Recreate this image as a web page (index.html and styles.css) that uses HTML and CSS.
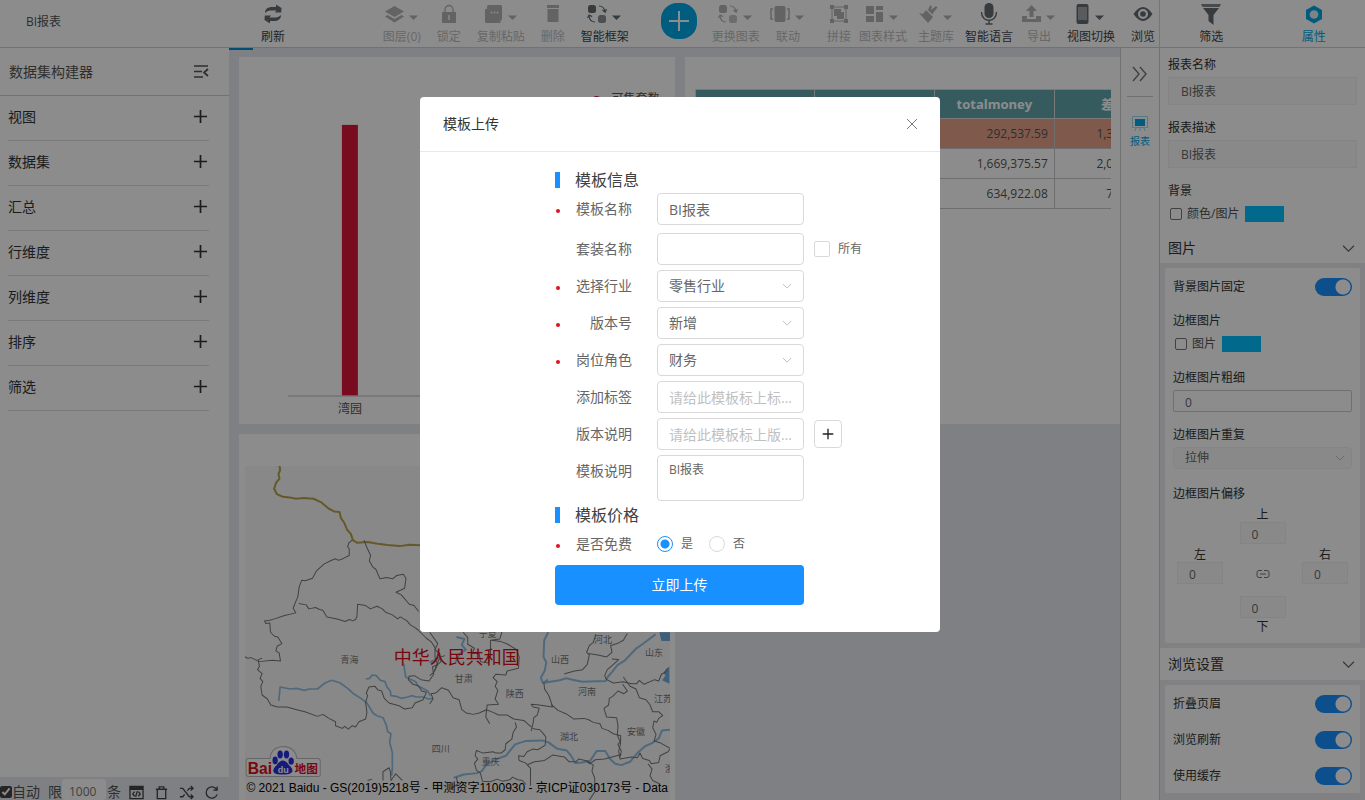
FILE: index.html
```html
<!DOCTYPE html>
<html lang="zh-CN">
<head>
<meta charset="utf-8">
<meta name="viewport" content="width=device-width, initial-scale=1">
<title>BI报表</title>
<link rel="stylesheet" href="styles.css">
</head>
<body>
<svg class="defs" aria-hidden="true">
  <symbol id="plus" viewBox="0 0 16 16"><path d="M8 1v14M1 8h14" fill="none" stroke="currentColor" stroke-width="1.8"/></symbol>
  <symbol id="chev" viewBox="0 0 12 12"><path d="M1 3.500l5 5 5-5" fill="none" stroke="currentColor" stroke-width="1.1"/></symbol>
  <symbol id="caret" viewBox="0 0 10 6"><path d="M0 .5h9L4.500 5z" fill="currentColor"/></symbol>
  <symbol id="swap" viewBox="0 0 20 20"><rect x="1" y="1" width="8" height="8" rx="2.500" fill="currentColor"/><rect x="11" y="11" width="8" height="8" rx="2.500" fill="currentColor" opacity=".75"/><path d="M12 2c3.500 0 5.500 2 6 6M15.500 6l2.700 2.300L19.500 5M8 18c-3 0-5.500-2-6-6M.5 14l1.600-3 3 1.600" fill="none" stroke="currentColor" stroke-width="1.200"/></symbol>
</svg>

<div class="app">
  <header class="topbar">
    <div class="doc-name">BI报表</div>
    <nav class="tools">
      <button class="tool dark refresh" type="button"><span class="tool-icon"><svg width="20" height="20" viewBox="0 0 20 20" fill="currentColor"><path d="M2 9c0-4 3-6 7-6h4V.5L18.500 4l-.3 4.500H12l1.500-2H9C6 6.500 4 7 2 9zM18 11c0 4-3 6-7 6H7v2.500L1.500 16l.3-4.500H8l-1.500 2H11c3 0 5-.5 7-2.500z"/></svg></span>刷新</button>
      <div class="tool-group g16 first">
        <button class="tool" type="button"><span class="tool-icon"><svg width="19" height="19" viewBox="0 0 19 19" fill="currentColor"><path d="M9.500 1L19 6.500 9.500 12 0 6.500zM2.500 10l7 4 7-4L19 11.500 9.500 17.500 0 11.500z"/></svg><svg class="caret"><use href="#caret"/></svg></span>图层(0)</button>
        <button class="tool" type="button"><span class="tool-icon"><svg width="16" height="20" viewBox="0 0 16 20"><path d="M4 9V5.500a4 4 0 018 0V9" fill="none" stroke="currentColor" stroke-width="1.300"/><path d="M1 8h14v11H1zM7.300 11v5h1.400v-5z" fill="currentColor" fill-rule="evenodd"/></svg></span>锁定</button>
        <button class="tool" type="button"><span class="tool-icon"><svg width="19" height="19" viewBox="0 0 19 19"><path d="M4.500 0h12q1.500 0 1.500 1.500V14q0 1.500-1.500 1.500V18H2.500Q1 18 1 16.500V4h2V1.500Q3 0 4.500 0z" fill="currentColor"/><g fill="#fff"><circle cx="7.500" cy="7.500" r=".9"/><circle cx="10.500" cy="7.500" r=".9"/><circle cx="13.500" cy="7.500" r=".9"/></g></svg><svg class="caret"><use href="#caret"/></svg></span>复制粘贴</button>
        <button class="tool" type="button"><span class="tool-icon"><svg width="14" height="18" viewBox="0 0 14 18" fill="currentColor"><path d="M1 0h12v3H1zM1.500 4h11V17h-11z"/></svg></span>删除</button>
        <button class="tool dark" type="button"><span class="tool-icon"><svg width="20" height="20"><use href="#swap"/></svg><svg class="caret"><use href="#caret"/></svg></span>智能框架</button>
      </div>
      <button class="add" type="button" aria-label="添加"><svg width="20" height="20" viewBox="0 0 20 20"><path d="M10 0v20M0 10h20" stroke="#fff" stroke-width="2"/></svg></button>
      <div class="tool-group g16">
        <button class="tool" type="button"><span class="tool-icon"><svg width="20" height="20"><use href="#swap"/></svg><svg class="caret"><use href="#caret"/></svg></span>更换图表</button>
        <button class="tool" type="button"><span class="tool-icon"><svg width="20" height="18" viewBox="0 0 20 18"><rect x="4.500" y="1" width="11" height="16" rx="2" fill="currentColor"/><path d="M3 4H1v10h2M17 4h2v10h-2" fill="none" stroke="currentColor" stroke-width="1.500"/></svg><svg class="caret"><use href="#caret"/></svg></span>联动</button>
      </div>
      <div class="tool-group g8 third">
        <button class="tool" type="button"><span class="tool-icon"><svg width="18" height="18" viewBox="0 0 18 18"><path d="M2 2h14v14H2z" fill="none" stroke="currentColor"/><path d="M4 4h7v3h3v7H7v-3H4zM0 0h4v4H0zM14 0h4v4h-4zM0 14h4v4H0zM14 14h4v4h-4z" fill="currentColor"/></svg></span>拼接</button>
        <button class="tool" type="button"><span class="tool-icon"><svg width="18" height="18" viewBox="0 0 18 18" fill="currentColor"><path d="M0 1h8v8H0zM10 1h7v4h-7zM0 11h8v6H0zM10 7h7v10h-7z"/></svg><svg class="caret"><use href="#caret"/></svg></span>图表样式</button>
      </div>
      <div class="tool-group g12">
        <button class="tool" type="button"><span class="tool-icon"><svg width="20" height="20" viewBox="0 0 20 20" fill="currentColor"><path d="M1 9l4 1 3-4 7 7-5 6zM10 6L12 1.500l2 .5-1 4 5-4 1.500 1.500-4 5-1 2z"/></svg><svg class="caret"><use href="#caret"/></svg></span>主题库</button>
        <button class="tool dark" type="button"><span class="tool-icon"><svg width="18" height="22" viewBox="0 0 18 22"><rect x="4.500" y="0" width="9" height="15" rx="4.500" fill="currentColor"/><path d="M1.500 9c0 11 15 11 15 0M9 17v4M5.500 21h7" fill="none" stroke="currentColor" stroke-width="1.400"/></svg></span>智能语言</button>
      </div>
      <div class="tool-group g16">
        <button class="tool" type="button"><span class="tool-icon"><svg width="19" height="18" viewBox="0 0 19 18" fill="currentColor"><path d="M9.500 0L15 6h-3.500v6h-4V6H4zM0 11h5v3h9v-3h5v6H0z"/></svg><svg class="caret"><use href="#caret"/></svg></span>导出</button>
        <button class="tool dark" type="button"><span class="tool-icon"><svg width="14" height="20" viewBox="0 0 14 20"><path d="M2.500 0h8q2 0 2 2v16q0 2-2 2h-8q-2 0-2-2V2q0-2 2-2zM2 3v13h9V3z" fill="currentColor" fill-rule="evenodd"/><path d="M2 3h9v13H2z" fill="currentColor" opacity=".6"/></svg><svg class="caret"><use href="#caret"/></svg></span>视图切换</button>
        <button class="tool dark" type="button"><span class="tool-icon"><svg width="20" height="16" viewBox="0 0 20 16"><path d="M.5 8Q10-6 19.500 8 10 22 .5 8zM10 3a5 5 0 100 10 5 5 0 000-10z" fill="currentColor" fill-rule="evenodd"/><circle cx="10" cy="8" r="2.800" fill="currentColor"/></svg></span>浏览</button>
      </div>
    </nav>
    <div class="side-tabs">
      <button class="tool dark" type="button"><span class="tool-icon"><svg width="20" height="21" viewBox="0 0 20 21"><path d="M0 0h20l-1.500 3h-17z" fill="currentColor" opacity=".8"/><path d="M2 4h16l-5.500 7v10L7.500 17v-6z" fill="currentColor"/></svg></span>筛选</button>
      <button class="tool active" type="button"><span class="tool-icon"><svg width="18" height="19" viewBox="0 0 18 19"><path d="M9 .5l8 4.500v9l-8 4.500L1 14V5z" fill="currentColor"/><circle cx="9" cy="9.500" r="4.300" fill="#e9eef3"/></svg></span>属性</button>
    </div>
  </header>

  <div class="workspace">
    <aside class="left">
      <div class="left-head"><span>数据集构建器</span><svg width="15" height="13" viewBox="0 0 15 13" fill="none" stroke="currentColor" stroke-width="1.700"><path d="M0 1h14M0 6.500h8M0 12h9M14 4l-4 3.500 4 3.500"/></svg></div>
      <ul class="fields">
        <li>视图<button type="button" aria-label="添加视图"><svg><use href="#plus"/></svg></button></li>
        <li>数据集<button type="button" aria-label="添加数据集"><svg><use href="#plus"/></svg></button></li>
        <li>汇总<button type="button" aria-label="添加汇总"><svg><use href="#plus"/></svg></button></li>
        <li>行维度<button type="button" aria-label="添加行维度"><svg><use href="#plus"/></svg></button></li>
        <li>列维度<button type="button" aria-label="添加列维度"><svg><use href="#plus"/></svg></button></li>
        <li>排序<button type="button" aria-label="添加排序"><svg><use href="#plus"/></svg></button></li>
        <li>筛选<button type="button" aria-label="添加筛选"><svg><use href="#plus"/></svg></button></li>
      </ul>
      <div class="left-foot">
        <label class="auto"><input type="checkbox" checked>自动</label>
        <label class="limit">限<input type="text" value="1000" aria-label="限制条数">条</label>
        <div class="foot-icons">
          <svg viewBox="0 0 16 16"><path d="M1 1.500h14v13H1zM1 4.500h14M6 7L4 9.500 6 12M10 7l2 2.500-2 2.500M9 6.500l-2 6"/><path d="M1 3h14" stroke-width="3"/></svg>
          <svg viewBox="0 0 16 16"><path d="M2 4.500h12M5.500 4V2h5v2M3.500 5v9.500h9V5"/></svg>
          <svg viewBox="0 0 16 16"><path d="M1 3.500h3l7 9h4M1 12.500h3l2-2.500M9 6l2-2.500h4M12.500 1L15 3.500 12.500 6M12.500 10l2.500 2.500-2.500 2.500"/></svg>
          <svg viewBox="0 0 16 16"><path d="M13.500 5A6 6 0 1014 10M14 1.500V5.500H10"/></svg>
        </div>
      </div>
    </aside>

    <main class="canvas">
      <section class="card">
        <svg class="chart" viewBox="0 0 436 367" preserveAspectRatio="xMidYMid meet">
          <circle cx="358" cy="43" r="4" fill="#dc143c"/>
          <text x="373" y="46" font-size="12" fill="#555">可售套数</text>
          <rect x="103" y="68" width="16" height="271" fill="#dc143c"/>
          <path d="M49 339.500h370" stroke="#bbb"/>
          <text x="111" y="356" font-size="12" fill="#555" text-anchor="middle">湾园</text>
        </svg>
      </section>
      <section class="card table-card">
        <div class="table-clip">
          <table>
            <thead><tr><th></th><th></th><th>totalmoney</th><th>差额</th></tr></thead>
            <tbody>
              <tr class="hot"><td></td><td></td><td>292,537.59</td><td>1,300,000.00</td></tr>
              <tr><td></td><td></td><td>1,669,375.57</td><td>2,000,000.00</td></tr>
              <tr><td></td><td></td><td>634,922.08</td><td>700,000.00</td></tr>
            </tbody>
          </table>
        </div>
      </section>
      <section class="card map-card">
        <svg class="map" viewBox="0 0 425 334" preserveAspectRatio="xMidYMid slice">
          <rect width="425" height="334" fill="#f8f8f7"/>
          <g transform="translate(-15 -36) scale(.33333)" fill="none" stroke-linejoin="round">
            <g stroke="#b5a24c" stroke-width="6"><path d="M150 108l2 12-5 12 3 14-10 12-6 18 8 16 18 8 20 2 20 4 22-2 30 2 22 10 24 20 16 8 16 2 4 18 10 14 8 20 12 14 6 18 12 8 32-2 30 5 30 4 36 3 30-4 50 2"/></g>
            <g stroke="#8fbfe4" stroke-width="5"><path d="M148 812l4-42 30 6 20-2 22 6 16-4 24 0 22-18 20-8 26 8 22 16 20 18 20 12 18 14 18 30 12 8 18 6 10 22 4 20 10 6-4 26 8 30 0 46-2 24"/><path d="M408 746l12-2 8-10 12 2 12 14 14 4 6 16 10 12 2 14 16 2 14 6 20-4 12-4 14 4 20 0 16 6 14-2M522 700l6 40 30 14 6 12 30 16 8 14"/></g>
            <g stroke="#777" stroke-width="3">
              <path d="M368 330l-10 8-4 12 5 6 0 20-16 8-8 4-10 2-8-4-14 6-20 10-22 20-12 22-22 8-10-2-8 20-4 30-8 18-6 16 8 14-34 8-30 10-14 4-16 2 4 8 12-2 2 28 12 12 10 2 12 20-14 8-4 14 10 6 4 24-24-2-40 4-24-12-10 2-16-8-8-8"/>
              <path d="M208 520l22 4 8 12 20-4 12 6 10 2 12 20 20 4 16 4 18 6 14-6 10 4 8-4 4-10 2-36 24 4 14 10 20-8 16 8 10 10 20 8 16 12 8-6 20 12 10 12 14 8 10 8 24 24 14 10 12 18 0 30 8 20-10 22"/>
              <path d="M403 330l8 20 12 26-4 16 10 18 10 8 12 28 20-4 18 4 12-10 20-4 8 12-4 30-26 12 16 8 24 28 14 4 14 18"/>
              <path d="M98 684l-12 4 4 20-6 10 14 12-6 14 8 10-6 14 4 26 16 12 10 18 20 6 28 0 30 8 24 6 38 14 16-6 18 12 20 10 0 12 20 8 8-6 10 8 12-10 10 4 10-16 20-8 4-20-4-30 6-20-4-8 8-18 18-2 8 10 12 4 8 22 14 14 30 8 16 10 24-4 8-14 24-10 10-22-14-4-10-16-16-4-14-14 2-10 16-2 20 12 24 4 14-20-4-22 12-6 12-24 14-4"/>
              <path d="M460 1050l0-26 18-12 4 10 2 28 14-20 20 20M414 1050l14-4"/>
            </g>
          </g>
          <g transform="translate(185 134) scale(.33333)" fill="none" stroke-linejoin="round">
            <g stroke="#8fbfe4" stroke-width="6"><path d="M355 96l-12 24-2 50 8 16-4 24-12 22 6 16 50-8 20-6 18 4 30 6 70-2 6-12 14-16 16-20 20-12 34-36 20-14 40-30M340 248l14-10M72 532l30-10 40-4 14-6 14-20 30-16 28-10 28-34 30-10 50-2 20 6 24 18 30 6 12 14 14 24 20-2 24-4 20-30 26 0 14 24 16 14 18 4 26-10 22-26 22-20 22-10 20-14 10-24 42-4M80 110l24 6-8 18 12 14-20 14-10 22M0 186l20-8 12-8"/></g>
            <path d="M688 96h32v26h-26zM718 198l-18 18 6 10-10 14 22 10z" fill="#6fb0e0"/>
            <g stroke="#777" stroke-width="3">
              <path d="M0 96l24 34-8 18 14 12 4 24-14 12-8 20-12 10M100 96l14 16 0 20 20 12-6 16 20 0 4 24 24 4 6-20 0-48 28-4 6-20-2-14M184 120l30 4 20 8 26 16 8 22-2 34-34 8-4 12-30-2-8 10 12 12-6 14 8 12-8 26 10 16-34 2-4 36 12 20"/>
              <path d="M0 310l10-14-6-16 14-2 18-16 20 8 14 22 18 6 8 30 14 10 20 4 18-4 22-10 20 8 16 8 26 0 20 12 14 2 16 2 20 18 12 8 16 2 12 14 6 8-2 24-22 14-16-2-16 8-10 14-16-2 2 14 20 8 14 16 0 52M342 246l2 20 12 18 8 22 4 14-40-6-24-2 6 8 18 4-6 20-10 8-2 14-6 26"/>
              <path d="M364 312l20 18 24 10 24 16 30-2 14 4 14 8 20 4 6 14 18 6 16 10 22 6 0 16-8 10 10 20-4 18M408 220l-4 0 30-8 24-4 14-16 6-28-8-8 8-20 12-10 8-24M474 160l30 4 26 6 16-14-4-20 20-6 18-10 12-20M546 176l20 2-20 18-14 12-8 18 6 12 20 10 30-4 24 6 16 0 8-10 14 12 32-14 12 4 8-20 12-6 6-12"/>
              <path d="M578 252l14 20-10 8-18-8-16 16-10 6-2 20-14 10 8 26 30 2 4 24-2 28 10 24-6 24 4 24 34-6 18 2 8-14 8 16 20 6 6 10 22-4 4-20 24-12 16-24-2-16M580 230l20 28 18 8 10 26 20 6 12 16 8 20 18 0 12 12-12 8-6 12-8-4-4 20 10 20-6 20 20 6 28 16M654 490l12 16-6 20 8 14 20 10"/>
              <path d="M256 366l4 14-10 16-4 20-18 14-2 18-12 10-16 0-8-4-30 4-20-8-4 16 8 10-10 12 6 22 12 8 6 24 24 2 20-8 16 6 22-4 8-8 16 8 14 2 10 12M294 492l20-8 30-4 24-16 36 6 14 14 20 0 8-8 20 4 14 10 16-12 28-2 50-14M470 480l20 14-4 18 8 20 2 40-20 30M80 530l4 20-20 14"/>
            </g>
          </g>
          <g font-size="9" fill="#777">
            <text x="96" y="197">青海</text><text x="210" y="216">甘肃</text><text x="234" y="171">宁夏</text><text x="349" y="177">河北</text><text x="306" y="197">山西</text><text x="400" y="190">山东</text><text x="261" y="231">陕西</text><text x="333" y="229">河南</text><text x="409" y="236">江苏</text><text x="315" y="274">湖北</text><text x="382" y="269">安徽</text><text x="187" y="286">四川</text><text x="237" y="299">重庆</text><text x="420" y="306">浙</text>
          </g>
          <text x="149" y="198" font-size="18" fill="#d80f18">中华人民共和国</text>
          <g transform="translate(-15 -36) scale(.33333)">
            <path d="M58 984h64q2-34 40-36 36 2 40 36h62q8 0 8 8v40q0 6-6 6H58q-8 0-8-8v-38q0-8 8-8z" fill="#fff" stroke="#bbb" stroke-width="3"/>
            <text x="55" y="1030" font-size="47" font-weight="700" fill="#dc0f18" class="latin">Bai</text>
            <g fill="#2932e1"><ellipse cx="137" cy="990" rx="8" ry="12"/><ellipse cx="152" cy="972" rx="8" ry="12"/><ellipse cx="171" cy="972" rx="8" ry="12"/><ellipse cx="185" cy="992" rx="8" ry="11"/><path d="M160 990q10 0 18 14 14 12 10 20-5 10-28 8-24 2-28-8-3-8 10-20 8-14 18-14z"/></g>
            <text x="145" y="1027" font-size="27" font-weight="700" fill="#fff" class="latin">du</text>
            <text x="195" y="1027" font-size="35" font-weight="700" fill="#dc0f18">地图</text>
          </g>
          <text x="2" y="326" font-size="12" fill="#000" class="latin">© 2021 Baidu - GS(2019)5218号 - 甲测资字1100930 - 京ICP证030173号 - Data</text>
        </svg>
      </section>
    </main>

    <nav class="rail">
      <button type="button" class="collapse" aria-label="收起"><svg width="16" height="16" viewBox="0 0 16 16" fill="none" stroke="currentColor" stroke-width="1.400"><path d="M1 1l6 7-6 7M8 1l6 7-6 7"/></svg></button>
      <button type="button" class="rail-item"><svg width="16" height="16" viewBox="0 0 16 16"><path d="M.5.500h15v11H.5zM4 12l-1 3M12 12l1 3M8 12v3" fill="none" stroke="currentColor" opacity=".4"/><path d="M3 3h10v7H3z" fill="currentColor"/></svg>报表</button>
    </nav>

    <aside class="props">
      <div class="prop-block">
        <label for="rname">报表名称</label><input id="rname" class="soft" type="text" value="BI报表">
        <label for="rdesc">报表描述</label><input id="rdesc" class="soft" type="text" value="BI报表">
        <span class="lbl">背景</span>
        <div class="check-row"><label><input type="checkbox">颜色/图片</label><span class="swatch"></span></div>
      </div>
      <div class="sec-head short">图片<svg><use href="#chev"/></svg></div>
      <div class="sec-body">
        <div class="panel">
          <label class="toggle-row">背景图片固定<input class="toggle" type="checkbox" checked></label>
          <span class="lbl">边框图片</span>
          <div class="check-row"><label><input type="checkbox">图片</label><span class="swatch"></span></div>
          <label class="lbl" for="bw">边框图片粗细</label><input id="bw" class="line" type="text" value="0">
          <label class="lbl" for="br">边框图片重复</label>
          <div class="pick"><select id="br" class="soft-select"><option>拉伸</option></select><svg><use href="#chev"/></svg></div>
          <span class="lbl">边框图片偏移</span>
          <div class="offsets">
            <label class="o-top">上<input type="text" value="0"></label>
            <label class="o-left">左<input type="text" value="0"></label>
            <svg class="link" viewBox="0 0 14 10"><path d="M6 1.500H3a2 2 0 00-2 2v3a2 2 0 002 2h3M8 1.500h3a2 2 0 012 2v3a2 2 0 01-2 2H8M4 5h6" fill="none" stroke="currentColor"/></svg>
            <label class="o-right">右<input type="text" value="0"></label>
            <label class="o-bottom"><input type="text" value="0">下</label>
          </div>
        </div>
      </div>
      <div class="sec-head">浏览设置<svg><use href="#chev"/></svg></div>
      <div class="sec-body grow">
        <div class="panel toggles">
          <label class="toggle-row">折叠页眉<input class="toggle" type="checkbox" checked></label>
          <label class="toggle-row">浏览刷新<input class="toggle" type="checkbox" checked></label>
          <label class="toggle-row">使用缓存<input class="toggle" type="checkbox" checked></label>
        </div>
      </div>
    </aside>
  </div>
</div>

<div class="overlay">
  <form class="modal" role="dialog" aria-labelledby="mtitle">
    <div class="modal-head"><h2 id="mtitle">模板上传</h2><button type="button" aria-label="关闭"><svg width="10" height="10" viewBox="0 0 10 10"><path d="M0 0l10 10M10 0L0 10" stroke="currentColor"/></svg></button></div>
    <div class="modal-body">
      <h3>模板信息</h3>
      <div class="row wide"><label class="req" for="f1">模板名称</label><input id="f1" type="text" value="BI报表"></div>
      <div class="row"><label for="f2">套装名称</label><input id="f2" type="text"><label class="all"><input type="checkbox">所有</label></div>
      <div class="row"><label class="req" for="f3">选择行业</label><div class="pick"><select id="f3"><option>零售行业</option></select><svg><use href="#chev"/></svg></div></div>
      <div class="row"><label class="req" for="f4">版本号</label><div class="pick"><select id="f4"><option>新增</option></select><svg><use href="#chev"/></svg></div></div>
      <div class="row"><label class="req" for="f5">岗位角色</label><div class="pick"><select id="f5"><option>财务</option></select><svg><use href="#chev"/></svg></div></div>
      <div class="row"><label for="f6">添加标签</label><input id="f6" type="text" placeholder="请给此模板标上标签名称"></div>
      <div class="row"><label for="f7">版本说明</label><input id="f7" type="text" placeholder="请给此模板标上版本说明"><button class="more" type="button" aria-label="添加版本说明"><svg width="12" height="12"><use href="#plus"/></svg></button></div>
      <div class="row"><label for="f8">模板说明</label><textarea id="f8">BI报表</textarea></div>
      <h3 class="price">模板价格</h3>
      <div class="row radios"><span class="req name">是否免费</span><label><input type="radio" name="free" checked>是</label><label><input type="radio" name="free">否</label></div>
      <button class="submit" type="button">立即上传</button>
    </div>
  </form>
</div>
</body>
</html>
```
FILE: styles.css
```css
* { box-sizing: border-box; }
html, body { height: 100%; }
body {
  margin: 0;
  overflow: hidden;
  font: 12px/18px "Open Sans", "Noto Sans CJK SC", sans-serif;
  color: #555;
}
button, input, select, textarea { font: inherit; color: inherit; }
button { padding: 0; border: 0; background: none; cursor: pointer; }
.defs { display: none; }
.latin { font-family: "Liberation Sans", "Noto Sans CJK SC", sans-serif; }

.app { display: flex; flex-direction: column; height: 100vh; background: #fff; }

/* top bar */
.topbar { display: flex; height: 48px; flex: none; border-bottom: 1px solid #d0d0d0; }
.doc-name { width: 229px; padding: 13px 26px; flex: none; }
.tools { display: flex; flex: 1; align-items: flex-start; border-right: 1px solid #d8d8d8; padding-right: 4px; }
.tool-group { display: flex; }
.g8 { gap: 8px; }
.g12 { gap: 11px; margin: 0 14px 0 11px; }
.g16 { gap: 16px; }
.third { margin-left: 27px; }
.first { margin-left: auto; }
.refresh { margin-left: 32px; }
.tool { display: flex; flex-direction: column; align-items: center; color: #bdbdbd; white-space: nowrap; }
.tool-icon { display: flex; align-items: center; justify-content: center; gap: 5px; height: 28px; width: 0; color: #b4b4b4; }
.tool-icon svg { flex: none; }
.caret { width: 10px; height: 6px; margin-top: 8px; }
.tool.dark { color: #444; }
.tool.dark .tool-icon { color: #656c70; }
.tool.active, .tool.active .tool-icon { color: #00a8e8; }
.add { display: grid; place-items: center; width: 36px; height: 36px; margin: 3px 15px 0 32px; border-radius: 16px; background: #00a9e8; }
.side-tabs { width: 205px; flex: none; display: flex; justify-content: space-around; }

/* workspace */
.workspace { display: flex; flex: 1; min-height: 0; }
.left { width: 229px; flex: none; display: flex; flex-direction: column; font-size: 14px; background: #fff; }
.left-head { display: flex; justify-content: space-between; align-items: center; height: 48px; flex: none; padding: 0 20px 0 9px; border-bottom: 1px solid #d0d0d0; }
.fields { list-style: none; margin: 0; padding: 0 20px 0 8px; flex: 1; }
.fields li { display: flex; justify-content: space-between; align-items: center; height: 45px; padding: 0 1px 3px 0; border-bottom: 1px solid #dedede; color: #333; }
.fields button, .fields svg { display: block; width: 15px; height: 15px; }
.left-foot { display: flex; align-items: flex-end; height: 23px; background: #e7eaee; line-height: 16px; }
.auto { display: flex; align-items: center; }
.auto input { width: 12px; height: 12px; margin: 0; accent-color: #444; }
.limit { display: flex; align-items: flex-end; margin-left: 8px; }
.limit input { width: 44px; height: 21px; margin-right: 1px; padding: 4px 7px 0; border: 0; border-radius: 3px; background: #fff; font-size: 12px; color: #777; }
.foot-icons { display: flex; gap: 10px; margin-left: 8px; }
.foot-icons svg { width: 15px; height: 15px; fill: none; stroke: #444; stroke-width: 1.4; }

.canvas {
  flex: 1; min-width: 0; display: grid; grid-template: 1fr 1fr / 1fr 1fr;
  gap: 10px; padding: 9px 0 0 10px;
  background: linear-gradient(#0090d0, #0090d0) 0 0 / 24px 2px no-repeat #e7eaee;
}
.card { min-width: 0; min-height: 0; background: #fff; overflow: hidden; }
.chart { display: block; width: 100%; height: 100%; }
.table-card { padding: 32px 9px 0 10px; }
.table-clip { overflow: hidden; }
table { width: 480px; table-layout: fixed; border-collapse: collapse; }
th, td { height: 30px; padding: 0 6px; border: 1px solid #c8c8c8; line-height: 18px; }
th { height: 29px; background: #62a7ae; border-color: #ddd; color: #fff; font-size: 13px; text-align: center; }
td { text-align: right; }
.hot td { background: #e7a38a; }
.map-card { padding: 32px 5px 0 6px; }
.map { display: block; width: 100%; height: 100%; }

.rail { width: 40px; flex: none; display: flex; flex-direction: column; align-items: center; border: solid #d0d0d0; border-width: 0 1px; }
.collapse { width: 26px; height: 49px; padding-top: 8px; border-bottom: 1px solid #ccc; color: #777; }
.rail-item { display: flex; flex-direction: column; align-items: center; margin-top: 19px; color: #00a9e8; font-size: 10px; }

/* properties */
.props { width: 205px; flex: none; display: flex; flex-direction: column; color: #333; }
.prop-block { display: flex; flex-direction: column; padding: 8px 8px 0; height: 185px; flex: none; }
.soft { width: 100%; height: 28px; margin: 3px 0 14px; padding: 0 12px; border: 1px solid #f0f0f0; background: #fafafa; color: #666; }
.check-row { display: flex; align-items: center; gap: 6px; height: 18px; margin-top: 5px; color: #555; }
.check-row label { display: flex; align-items: center; }
.check-row input { appearance: none; width: 12px; height: 12px; margin: 0 5px 0 2px; border: 1px solid #777; border-radius: 2px; }
.swatch { width: 39px; height: 16px; background: #00bfff; }
.sec-head { display: flex; justify-content: space-between; align-items: center; height: 32px; flex: none; padding: 0 10px 0 8px; font-size: 14px; }
.short { height: 30px; }
.sec-head svg { width: 13px; height: 13px; color: #666; }
.sec-body { padding: 5px; background: #ececee; }
.grow { flex: 1; }
.panel { display: flex; flex-direction: column; padding: 9px 8px 5px; background: #fff; border-radius: 2px; }
.toggle-row { display: flex; justify-content: space-between; align-items: center; height: 20px; }
.toggle { appearance: none; width: 37px; height: 18px; margin: 0; border-radius: 9px; background: radial-gradient(circle at 28px 9px, #fff 7px, transparent 8px) #1890ff; }
.panel > .lbl { margin-top: 14px; }
.panel > .lbl:first-of-type { margin-top: 15px; }
.panel .check-row { margin-bottom: 2px; }
.line { width: 100%; height: 22px; margin: 3px 0 0; padding: 2px 11px 0; border: 1px solid #ccc; border-radius: 2px; color: #666; }
.panel .pick { margin: 3px 0 2px; }
.pick { position: relative; }
.pick select { appearance: none; width: 100%; height: 32px; padding: 0 11px; border: 1px solid #d9d9d9; border-radius: 4px; background: #fff; }
.pick svg { position: absolute; right: 12px; top: 11px; width: 10px; height: 10px; color: #bbb; pointer-events: none; }
.pick .soft-select { height: 22px; border-color: #f0f0f0; background: #fafafa; color: #666; }
.panel .pick svg { top: 6px; right: 7px; }
.offsets { display: grid; grid-template: "a t b" 40px "l m r" 40px "c d e" 54px / 46px 46px 46px; justify-content: space-between; padding: 1px 4px 0; text-align: center; }
.offsets label { display: flex; flex-direction: column; align-items: center; padding-top: 4px; line-height: 14px; }
.offsets input { width: 46px; height: 22px; padding: 2px 11px 0; border: 1px solid #f0f0f0; background: #fafafa; color: #666; flex: none; }
.o-top { grid-area: t; }
.o-left { grid-area: l; }
.o-right { grid-area: r; }
.offsets .o-bottom { grid-area: d; padding-top: 12px; line-height: 18px; }
.link { grid-area: m; width: 14px; height: 10px; margin: 25px auto 0; color: #777; }
.toggles { gap: 16px; padding-bottom: 7px; }

/* dialog */
.overlay { position: fixed; inset: 0; padding: 97px 5px 0 0; background: rgba(0, 0, 0, .45); }
.modal { width: 520px; margin: 0 auto; border-radius: 4px; background: #fff; font-size: 14px; color: #666; }
.modal-head { display: flex; justify-content: space-between; align-items: center; height: 55px; padding: 0 23px; border-bottom: 1px solid #e8e8e8; }
.modal-head h2 { margin: 0; font-size: 14px; font-weight: 400; color: #333; }
.modal-head button { height: 14px; line-height: 1; color: #777; }
.modal-body { padding: 16px 136px 27px 135px; }
h3 { display: flex; align-items: center; gap: 15px; margin: 0 0 1px; font-size: 16px; font-weight: 400; line-height: 24px; color: #404040; }
h3::before { content: ""; width: 5px; height: 16px; background: #1890ff; }
.price { margin-top: -3px; }
.row { display: flex; margin-bottom: 5px; }
.wide { margin-bottom: 8px; }
.row > label:first-child, .name { position: relative; width: 77px; margin-right: 25px; flex: none; line-height: 32px; text-align: right; }
.req::before { content: ""; position: absolute; left: 1px; top: 16px; width: 4px; height: 4px; border-radius: 50%; background: #e0101c; }
.row > input, .row > .pick, .row > textarea { width: 147px; flex: none; }
.row > input, .row > textarea { height: 32px; padding: 0 11px; border: 1px solid #d9d9d9; border-radius: 4px; background: #fff; text-overflow: ellipsis; }
.row > textarea { height: 46px; padding-top: 5px; font-size: 12px; resize: none; }
.row > input::placeholder { color: #bfbfbf; text-overflow: ellipsis; }
.all { display: flex; align-items: center; margin-left: 10px; flex: none; font-size: 12px; }
.all input { appearance: none; width: 16px; height: 16px; margin: 0 8px 0 0; border: 1px solid #d9d9d9; border-radius: 2px; }
.more { display: grid; place-items: center; width: 28px; height: 28px; margin: 2px 0 0 10px; border: 1px solid #d9d9d9; border-radius: 4px; flex: none; color: #222; }
.radios { font-size: 14px; }
.radios label { display: flex; align-items: center; margin-right: 16px; font-size: 12px; }
.radios input { appearance: none; width: 16px; height: 16px; margin: 0 8px 0 0; border: 1px solid #d9d9d9; border-radius: 50%; }
.radios input:checked { border-color: #1890ff; background: radial-gradient(circle, #1890ff 4px, transparent 5px); }
.submit { display: block; width: 100%; height: 40px; border-radius: 4px; background: #1890ff; color: #fff; }
```
